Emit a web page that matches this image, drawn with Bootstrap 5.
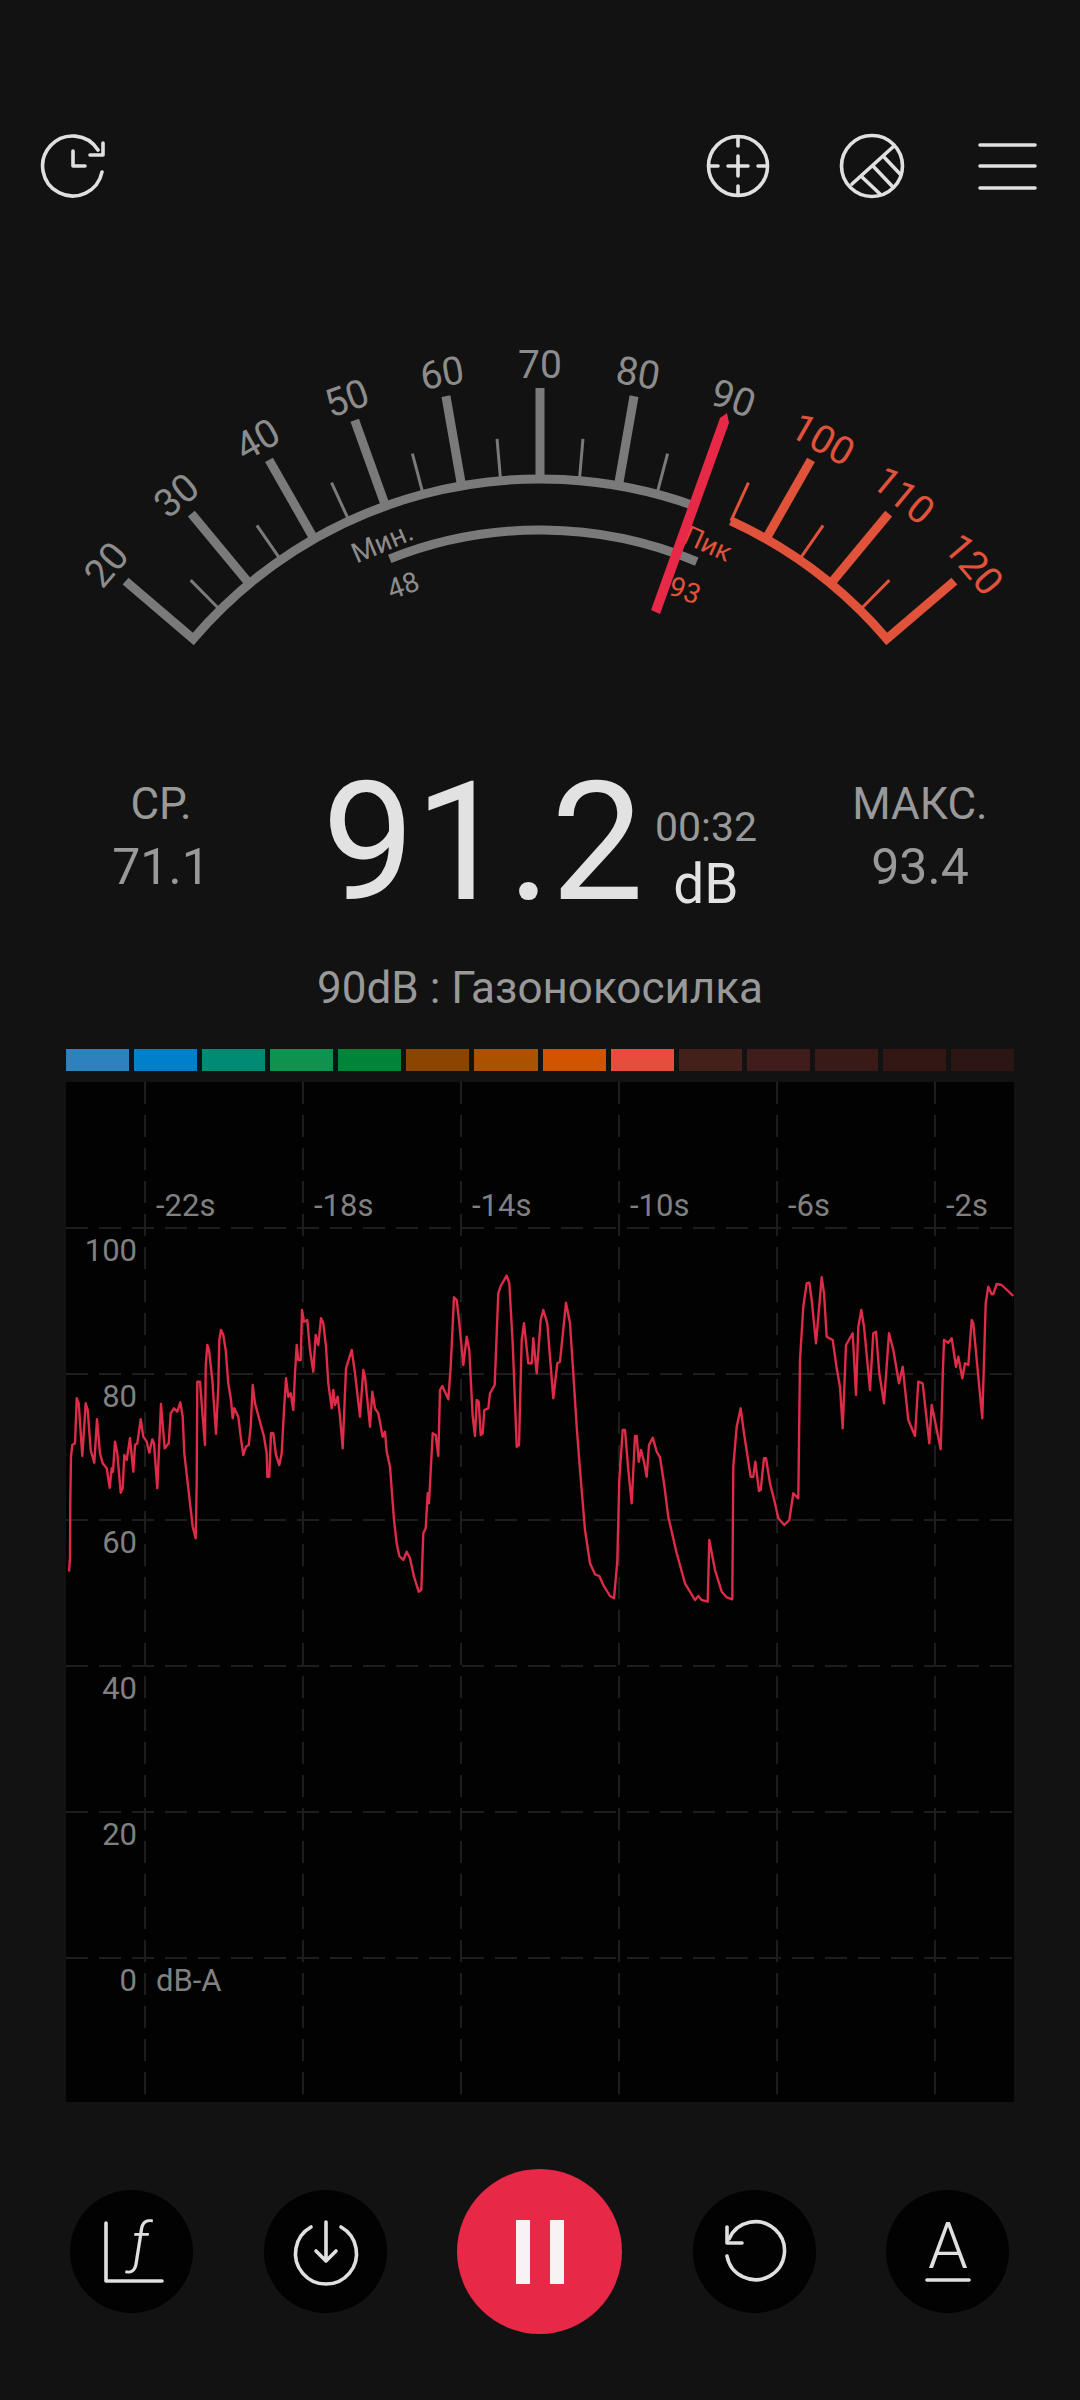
<!DOCTYPE html>
<html lang="ru">

<head>
  <meta charset="UTF-8">
  <meta name="viewport" content="width=device-width, initial-scale=1">
  <title>Sound Meter</title>
  <link href="https://cdn.jsdelivr.net/npm/bootstrap@5.3.0/dist/css/bootstrap.min.css" rel="stylesheet">
  <style>
    html, body {
      height: 2400px;
      background-color: #121212;
    }

    body {
      font-family: Roboto, "Noto Sans", sans-serif;
      color: #999;
      overflow: hidden;
    }

    svg { display: block; }
    svg text { font-family: Roboto, "Noto Sans", sans-serif; }

    .ico { fill: none; stroke: #e0e0e0; stroke-width: 3.6; stroke-linecap: round; stroke-linejoin: round; }

    .top-icons { padding: 131px 37px 0 38px; height: 201px; gap: 65px; }
    .gauge { margin-top: 129px; }

    .stats { margin-top: 110px; height: 144px; }
    .stat-side { width: 322px; }
    .stat-side.right-side { width: 320px; margin-left: auto; }
    .stat-label { font-size: 44px; line-height: 68px; }
    .stat-value { font-size: 50px; line-height: 58px; }
    .reading { font-size: 165px; line-height: 146px; color: #e2e2e2; margin-left: 0; width: 330px; }
    .reading-side { width: 108px; }
    .timer { font-size: 41px; line-height: 54px; margin-top: 30px; }
    .unit { font-size: 55px; line-height: 60px; color: #e2e2e2; }

    .caption { font-size: 44px; line-height: 60px; margin-top: 44px; }

    .level-bars { margin: 31px 66px 11px; height: 22px; gap: 5px; }
    .level-bars > div { flex: 1 1 0; }

    .chart { background-color: #020202; margin-left: 66px; }
    .chart-label { font-size: 31px; fill: #808080; }

    .controls { margin-top: 67px; padding-left: 70px; gap: 70.6px; }
    .round-btn { width: 123px; height: 123px; background-color: #020202; border: 0; }
    .round-btn.main-btn { width: 165px; height: 165px; background-color: #e72847; }
  </style>
</head>

<body>
  <!-- Top icons -->
  <div class="top-icons d-flex align-items-center">
    <svg class="ico me-auto" width="70" height="70" viewBox="0 0 70 70">
      <path d="M60 19A30 30 0 1 0 64 41"/>
      <path d="M52 24H65V12"/>
      <path d="M35 20V35H47"/>
    </svg>
    <svg class="ico" width="70" height="70" viewBox="0 0 70 70">
      <circle cx="35" cy="35" r="29.500"/>
      <path d="M35 6V15M35 55V64M6 35H15M55 35H64M25 35H45M35 25V45"/>
    </svg>
    <svg class="ico" width="70" height="70" viewBox="0 0 70 70">
      <circle cx="34" cy="35" r="30.500"/>
      <path d="M14 53L56 15M45 25L63 44M35 35L54 55M24 46L42 63"/>
    </svg>
    <svg class="ico" width="70" height="70" viewBox="0 0 70 70">
      <path d="M7 14H62M7 35H62M7 57H62"/>
    </svg>
  </div>

  <!-- Gauge, drawn in script below -->
  <svg id="gauge" class="gauge" width="1080" height="330" viewBox="0 330 1080 330"></svg>

  <!-- Readings -->
  <div class="stats d-flex">
    <div class="stat-side text-center">
      <div class="stat-label">СР.</div>
      <div class="stat-value">71.1</div>
    </div>
    <div class="reading">91.2</div>
    <div class="reading-side text-center">
      <div class="timer">00:32</div>
      <div class="unit">dB</div>
    </div>
    <div class="stat-side right-side text-center">
      <div class="stat-label">МАКС.</div>
      <div class="stat-value">93.4</div>
    </div>
  </div>

  <div class="caption text-center">90dB : Газонокосилка</div>

  <div id="levelBars" class="level-bars d-flex"></div>

  <!-- History chart -->
  <svg id="chart" class="chart" width="948" height="1020" viewBox="66 1082 948 1020"></svg>

  <!-- Bottom controls -->
  <div class="controls d-flex align-items-center">
    <button class="btn round-btn rounded-circle p-0">
      <svg width="123" height="123" viewBox="70 2190 123 123">
        <path class="ico" d="M106 2223V2281H162"/>
        <text x="140" y="2262" text-anchor="middle" font-size="56" font-weight="300" font-style="italic" fill="#e0e0e0">ƒ</text>
      </svg>
    </button>
    <button class="btn round-btn rounded-circle p-0">
      <svg class="ico" width="123" height="123" viewBox="264 2190 123 123">
        <path d="M311 2227A30.500 30.500 0 1 0 341 2227"/>
        <path d="M326 2222V2261M316 2251L326 2261L336 2251"/>
      </svg>
    </button>
    <button class="btn round-btn main-btn rounded-circle p-0 d-flex align-items-center justify-content-center">
      <svg width="48" height="64" viewBox="0 0 48 64">
        <rect x="0" y="0" width="14" height="64" fill="#f7f2f3"/>
        <rect x="34" y="0" width="14" height="64" fill="#f7f2f3"/>
      </svg>
    </button>
    <button class="btn round-btn rounded-circle p-0">
      <svg class="ico" width="123" height="123" viewBox="692 2190 123 123">
        <path d="M726 2256A29 29 0 1 0 728 2239"/>
        <path d="M726 2227V2243H741"/>
      </svg>
    </button>
    <button class="btn round-btn rounded-circle p-0">
      <svg width="123" height="123" viewBox="886 2190 123 123">
        <text x="948" y="2268" text-anchor="middle" font-size="64" font-weight="300" fill="#e0e0e0">A</text>
        <path class="ico" d="M927 2280H969"/>
      </svg>
    </button>
  </div>

  <script>
    const NS = "http://www.w3.org/2000/svg";
    const GREY = "#7a7a7a", RED = "#e0523a";
    const CX = 540, CY = 935;

    function add(parent, tag, attrs, text) {
      const el = document.createElementNS(NS, tag);
      Object.keys(attrs).forEach(k => el.setAttribute(k, attrs[k]));
      if (text) el.textContent = text;
      parent.appendChild(el);
      return el;
    }

    function angleOf(db) { return (db - 70) * 0.99; }

    function polar(r, deg) {
      const a = deg * Math.PI / 180;
      return [CX + r * Math.sin(a), CY - r * Math.cos(a)];
    }

    function drawGauge() {
      const g = document.getElementById("gauge");
      const R = 456;

      for (let db = 25; db <= 115; db += 5) {
        if (db === 90) continue;
        const major = db % 10 === 0;
        const a = angleOf(db);
        const from = polar(R, a), to = polar(R + (major ? 91 : 42), a);
        add(g, "line", {
          x1: from[0], y1: from[1], x2: to[0], y2: to[1],
          stroke: db >= 95 ? RED : GREY, "stroke-width": major ? 9 : 3
        });
      }

      // main scale with its end ticks, mitred into the corners
      const s0 = polar(R, angleOf(20)), t0 = polar(R + 89, angleOf(20)), s1 = polar(R, angleOf(90));
      add(g, "path", {
        d: `M${t0} L${s0} A${R} ${R} 0 0 1 ${s1}`, fill: "none", stroke: GREY, "stroke-width": 9
      });
      const r0 = polar(R, angleOf(95)), r1 = polar(R, angleOf(120)), t1 = polar(R + 89, angleOf(120));
      add(g, "path", {
        d: `M${r0} A${R} ${R} 0 0 1 ${r1} L${t1}`, fill: "none", stroke: RED, "stroke-width": 9
      });

      // min / peak arc
      const m0 = polar(405, angleOf(48)), m1 = polar(405, angleOf(93));
      add(g, "path", {
        d: `M${m0} A405 405 0 0 1 ${m1}`, fill: "none", stroke: GREY, "stroke-width": 9
      });

      for (let db = 20; db <= 120; db += 10) {
        const a = angleOf(db);
        const p = polar(571, a);
        add(g, "text", {
          x: p[0], y: p[1] + 14, "text-anchor": "middle", "font-size": 39,
          fill: db >= 100 ? RED : "#8c8c8c",
          transform: `rotate(${a} ${p[0]} ${p[1]})`
        }, String(db));
      }

      const small = [
        ["Мин.", 382, 542, -23, 28, "#8c8c8c"],
        ["48", 403, 585, -20, 28, "#8c8c8c"],
        ["Пик", 708, 543, 24, 27, RED],
        ["93", 685, 590, 20, 28, RED]
      ];
      small.forEach(t => add(g, "text", {
        x: t[1], y: t[2] + 10, "text-anchor": "middle", "font-size": t[4], fill: t[5],
        transform: `rotate(${t[3]} ${t[1]} ${t[2]})`
      }, t[0]));

      add(g, "polygon", { points: "651,610 660,614 729,423 727,413 720,418", fill: "#e72847" });
    }

    function drawBars() {
      const colors = ["#2d81bd", "#0080c8", "#008c74", "#0f914f", "#00843a", "#8a4500", "#ab5200", "#d35400",
        "#e74c3c", "#44201a", "#401d1a", "#3a1a17", "#331714", "#2c1613"];
      const wrap = document.getElementById("levelBars");
      colors.forEach(c => {
        const d = document.createElement("div");
        d.style.backgroundColor = c;
        wrap.appendChild(d);
      });
    }

    // trace points read off the reference, in 3x crop coordinates
    const traceLeft = [[87,1235],[90,1195],[91,1020],[93,890],[97,855],[105,850],[110,715],[116,730],[127,888],[137,730],[143,750],[152,870],[163,908],[171,778],[180,880],[188,910],[200,925],[209,983],[215,925],[219,935],[225,845],[232,880],[242,998],[248,985],[253,885],[260,900],[270,835],[280,935],[285,855],[292,850],[302,778],[310,830],[320,845],[328,878],[337,838],[342,850],[352,985],[363,732],[374,865],[386,850],[392,760],[402,745],[412,755],[421,727],[428,770],[433,880],[445,985],[458,1100],[467,1135],[470,970],[472,665],[480,665],[488,770],[495,855],[497,620],[502,555],[507,570],[517,660],[528,822],[535,680],[538,540],[543,510],[550,525],[557,570],[565,670],[573,720],[578,775],[583,745],[595,770],[602,830],[610,885],[618,860],[626,855],[632,800],[638,675],[645,730],[660,785],[672,830],[680,880],[682,950],[688,950],[693,820],[700,820],[708,885],[718,915],[725,880],[732,750],[738,655],[745,710],[752,700],[760,750],[765,640],[770,555],[775,600],[782,600],[786,450],[792,485],[802,480],[810,570],[820,635],[827,525],[835,555],[843,475],[850,490],[858,560],[865,670],[875,745],[880,690],[885,735],[893,710],[900,770],[908,865],[918,625],[935,570],[945,640],[960,770],[970,630],[975,650],[990,800],[997,695],[1005,745],[1015,760],[1028,830],[1035,815],[1040,875],[1050,920],[1062,1080],[1070,1150],[1078,1188],[1090,1200],[1100,1175],[1110,1195],[1122,1250],[1136,1295],[1144,1290],[1150,1120],[1157,1105],[1163,1000],[1167,1030],[1178,820],[1187,825],[1195,888],[1200,690],[1207,678],[1225,718],[1232,620],[1242,412],[1250,420],[1258,490],[1270,615],[1280,530],[1288,570],[1298,770],[1305,828],[1310,720],[1316,725],[1322,825],[1328,820],[1333,750],[1345,745],[1350,700],[1364,675],[1375,400],[1382,378],[1400,347],[1408,370],[1418,550],[1430,860],[1437,855],[1445,540],[1452,490],[1465,610],[1475,610],[1480,535],[1490,640]];
    const traceRight = [[2,480],[10,450],[22,490],[40,715],[52,610],[60,605],[78,428],[90,490],[100,640],[110,800],[120,930],[135,1110],[150,1210],[165,1243],[178,1248],[190,1275],[210,1308],[222,1315],[232,1205],[238,960],[248,810],[255,810],[265,930],[275,1030],[285,828],[290,828],[296,905],[303,870],[312,905],[320,950],[327,855],[338,833],[350,875],[360,892],[372,970],[385,1070],[410,1180],[435,1270],[465,1320],[475,1308],[485,1320],[503,1325],[508,1140],[525,1230],[545,1295],[560,1312],[577,1318],[580,920],[590,800],[602,745],[612,820],[632,950],[640,950],[646,905],[657,993],[662,990],[672,895],[678,895],[690,970],[705,1030],[715,1075],[733,1095],[748,1080],[760,1000],[775,1015],[780,600],[790,440],[800,370],[808,368],[815,420],[828,550],[845,352],[852,400],[860,530],[878,540],[890,625],[900,680],[908,805],[918,555],[938,520],[948,705],[955,500],[964,450],[972,500],[990,690],[1000,520],[1008,515],[1018,640],[1032,730],[1047,520],[1060,570],[1077,670],[1088,620],[1105,780],[1125,828],[1135,665],[1148,670],[1168,850],[1175,735],[1202,868],[1208,650],[1212,540],[1225,548],[1235,535],[1248,620],[1255,590],[1267,655],[1275,610],[1285,615],[1295,480],[1300,490],[1315,650],[1327,775],[1337,430],[1345,380],[1355,403],[1360,402],[1370,372],[1385,375],[1420,408]];

    function drawChart() {
      const c = document.getElementById("chart");
      const grid = { stroke: "#1d1d1d", "stroke-width": 2, "stroke-dasharray": "22 11" };

      [145, 303, 461, 619, 777, 935].forEach(x => add(c, "line", { x1: x, y1: 1082, x2: x, y2: 2102, ...grid }));
      [1228, 1374, 1520, 1666, 1812, 1958].forEach(y => add(c, "line", { x1: 66, y1: y, x2: 1014, y2: y, ...grid }));

      ["-22s", "-18s", "-14s", "-10s", "-6s", "-2s"].forEach((t, i) => {
        add(c, "text", { x: 156 + i * 158, y: 1216, class: "chart-label" }, t);
      });

      [100, 80, 60, 40, 20, 0].forEach((v, i) => {
        add(c, "text", { x: 137, y: 1261 + i * 146, "text-anchor": "end", class: "chart-label" }, String(v));
      });
      add(c, "text", { x: 156, y: 1991, class: "chart-label" }, "dB-A");

      const pts = traceLeft.map(p => [40 + p[0] / 3, 1160 + p[1] / 3])
        .concat(traceRight.map(p => [540 + p[0] / 3, 1160 + p[1] / 3]));
      add(c, "polyline", {
        points: pts.map(p => p[0].toFixed(1) + "," + p[1].toFixed(1)).join(" "),
        fill: "none", stroke: "#dc2c48", "stroke-width": 2.4, "stroke-linejoin": "round"
      });
    }

    drawGauge();
    drawBars();
    drawChart();
  </script>

  <script src="https://cdn.jsdelivr.net/npm/bootstrap@5.3.0/dist/js/bootstrap.bundle.min.js"></script>
</body>

</html>
